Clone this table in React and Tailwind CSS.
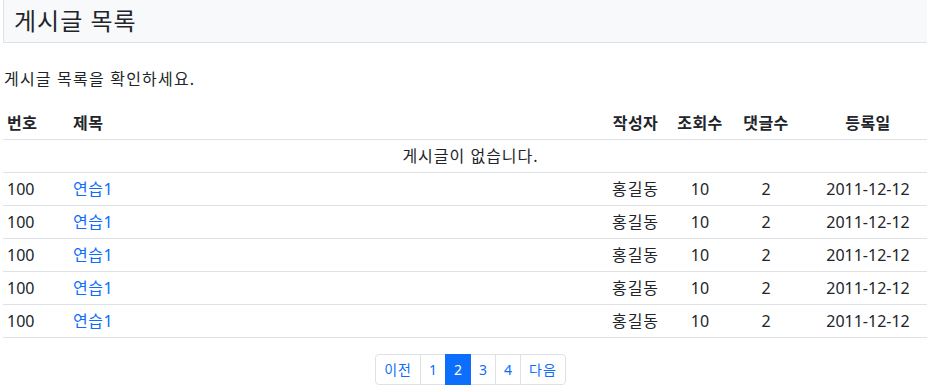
import React from 'react'

const rows = Array.from({ length: 5 }, () => ({
  no: 100,
  title: '연습1',
  writer: '홍길동',
  views: 10,
  comments: 2,
  date: '2011-12-12',
}))

const pages = ['이전', '1', '2', '3', '4', '다음']

export default function App() {
  return (
    <div
      className="w-[927px] h-[386px] overflow-hidden bg-white text-[#212529]"
      style={{ fontFamily: '"Noto Sans", "Noto Sans CJK KR", sans-serif' }}
    >
      <div className="ml-[3px] w-[935px]">
        <div className="h-[43px] bg-[#f8f9fa] border-l border-b border-[#dee2e6] pl-[10px] flex items-center">
          <h4 className="text-[24px] leading-[30px] font-normal tracking-[1px]">게시글 목록</h4>
        </div>

        <p className="mt-[24px] mb-[16px] text-[16px] leading-6 pl-[1px] tracking-[1.2px]">게시글 목록을 확인하세요.</p>

        <table className="w-[935px] table-fixed border-collapse text-[16px] leading-6">
          <colgroup>
            <col className="w-[66px]" />
            <col className="w-[536px]" />
            <col className="w-[61px]" />
            <col className="w-[68px]" />
            <col className="w-[64px]" />
            <col className="w-[140px]" />
          </colgroup>
          <thead>
            <tr className="border-b border-[#dee2e6] tracking-[0.5px]">
              <th className="p-1 text-left font-bold">번호</th>
              <th className="p-1 text-left font-bold">제목</th>
              <th className="p-1 text-center font-bold">작성자</th>
              <th className="p-1 text-center font-bold">조회수</th>
              <th className="p-1 text-center font-bold">댓글수</th>
              <th className="p-1 text-center font-bold">등록일</th>
            </tr>
          </thead>
          <tbody>
            <tr className="border-b border-[#dee2e6]">
              <td colSpan={6} className="p-1 text-center tracking-[1px]">게시글이 없습니다.</td>
            </tr>
            {rows.map((r, i) => (
              <tr key={i} className="border-b border-[#dee2e6]">
                <td className="p-1">{r.no}</td>
                <td className="p-1">
                  <a href="#" className="text-[#0d6efd] tracking-[0.5px]">{r.title}</a>
                </td>
                <td className="p-1 text-center tracking-[1px]">{r.writer}</td>
                <td className="p-1 text-center">{r.views}</td>
                <td className="p-1 text-center">{r.comments}</td>
                <td className="p-1 text-center">{r.date}</td>
              </tr>
            ))}
          </tbody>
        </table>

        <nav className="mt-[16px] flex justify-center">
          <ul className="flex text-[14px] leading-[21px]">
            {pages.map((p, i) => {
              const active = p === '2'
              return (
                <li key={p}>
                  <a
                    href="#"
                    className={
                      'block px-2 py-[4px] border ' +
                      (i === 0 || i === pages.length - 1 ? 'tracking-[1px] ' : '') +
                      (i > 0 ? '-ml-px ' : '') +
                      (i === 0 ? 'rounded-l ' : '') +
                      (i === pages.length - 1 ? 'rounded-r ' : '') +
                      (active
                        ? 'bg-[#0d6efd] border-[#0d6efd] text-white relative z-10'
                        : 'bg-white border-[#dee2e6] text-[#0d6efd]')
                    }
                  >
                    {p}
                  </a>
                </li>
              )
            })}
          </ul>
        </nav>
      </div>
    </div>
  )
}
